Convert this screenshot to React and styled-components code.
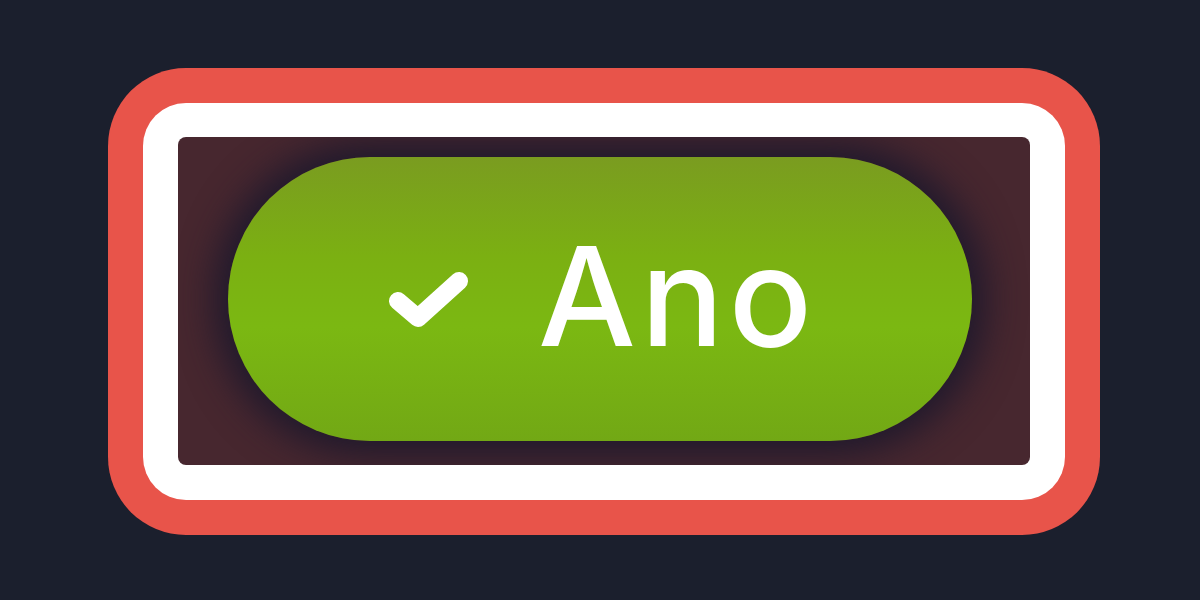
import React from "react";
import styled, { createGlobalStyle } from "styled-components";

const Global = createGlobalStyle`
  html, body { margin: 0; padding: 0; background: #1b1f2d; }
  body { font-family: Inter, "Liberation Sans", sans-serif; }
`;

const Page = styled.div`
  width: 1200px;
  height: 600px;
  box-sizing: border-box;
  padding: 68px 100px 67px 108px;
  display: flex;
  align-items: flex-start;
  justify-content: flex-start;
`;

const RedFrame = styled.div`
  padding: 35px;
  border-radius: 78px;
  background: #e8544a;
`;

const WhiteFrame = styled.div`
  padding: 34px 35px 35px 35px;
  border-radius: 43px;
  background: #ffffff;
`;

const Stage = styled.div`
  width: 852px;
  height: 328px;
  box-sizing: border-box;
  padding: 20px 58px 24px 50px;
  border-radius: 8px;
  background: #47272f;
  display: flex;
  overflow: hidden;
`;

const Pill = styled.button`
  flex: 1;
  border: none;
  border-radius: 999px;
  background: linear-gradient(180deg, #7a9c20 0%, #7bb012 35%, #7bb812 60%, #72a815 100%);
  box-shadow: 0 0 36px 14px rgba(28, 24, 44, 0.95);
  display: flex;
  align-items: center;
  justify-content: center;
  gap: 70px;
  padding: 0 0 0 0;
  color: #ffffff;
  font-family: Inter, "Liberation Sans", sans-serif;
  font-size: 138px;
  font-weight: 500;
  line-height: 1;
  cursor: pointer;
`;

const Label = styled.span`
  display: block;
  margin-top: -6px;
  letter-spacing: 5px;
  margin-right: -5px;
`;

const CheckIcon = styled.svg`
  display: block;
  flex: none;
  margin-top: 4px;
`;

const Check = () => (
  <CheckIcon width="80" height="62" viewBox="0 0 80 62" fill="none">
    <path
      d="M10 31 L30 48 L71 11"
      stroke="#ffffff"
      strokeWidth="18"
      strokeLinecap="round"
      strokeLinejoin="round"
    />
  </CheckIcon>
);

export default function App() {
  return (
    <>
      <Global />
      <Page>
        <RedFrame>
          <WhiteFrame>
            <Stage>
              <Pill>
                <Check />
                <Label>Ano</Label>
              </Pill>
            </Stage>
          </WhiteFrame>
        </RedFrame>
      </Page>
    </>
  );
}
